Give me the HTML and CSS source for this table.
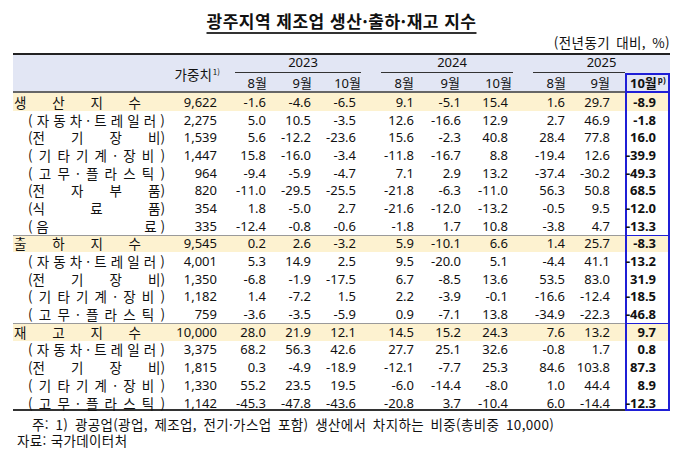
FILE: index.html
```html
<!DOCTYPE html>
<html lang="ko">
<head>
<meta charset="utf-8">
<title>광주지역 제조업 생산·출하·재고 지수</title>
<link rel="stylesheet" href="styles.css">
</head>
<body>
<div class="page">
  <h1 class="title"><span>광주지역 제조업 생산·출하·재고 지수</span></h1>
  <div class="unit">(전년동기 대비, %)</div>
  <table class="tbl">
    <colgroup>
      <col class="c-label"><col class="c-w"><col class="c-47"><col class="c-45"><col class="c-45">
      <col class="c-58"><col class="c-47"><col class="c-47"><col class="c-57"><col class="c-55"><col class="c-45">
    </colgroup>
    <thead>
      <tr class="r-year">
        <th rowspan="2" class="h-span"></th>
        <th rowspan="2" class="h-span h-w">가중치<sup>1)</sup></th>
        <th colspan="3"><div class="yr yr-23">2023</div></th>
        <th colspan="3"><div class="yr yr-24">2024</div></th>
        <th colspan="3"><div class="yr yr-25">2025</div></th>
      </tr>
      <tr class="r-mon">
        <th class="m1">8월</th><th class="m2">9월</th><th class="m3">10월</th>
        <th class="m4">8월</th><th class="m5">9월</th><th class="m6">10월</th>
        <th class="m7">8월</th><th class="m8">9월</th><th class="hl m9">10월<sup>p)</sup></th>
      </tr>
    </thead>
    <tbody>
      <tr class="sec">
        <td><div class="lm"><span>생</span><span>산</span><span>지</span><span>수</span></div></td>
        <td>9,622</td><td>-1.6</td><td>-4.6</td><td>-6.5</td><td>9.1</td><td>-5.1</td><td>15.4</td><td>1.6</td><td>29.7</td><td class="hl">-8.9</td>
      </tr>
      <tr>
        <td><div class="ls"><span>(</span><span>자</span><span>동</span><span>차</span><span>·</span><span>트</span><span>레</span><span>일</span><span>러</span><span>)</span></div></td>
        <td>2,275</td><td>5.0</td><td>10.5</td><td>-3.5</td><td>12.6</td><td>-16.6</td><td>12.9</td><td>2.7</td><td>46.9</td><td class="hl">-1.8</td>
      </tr>
      <tr>
        <td><div class="ls"><span>(전</span><span>기</span><span>장</span><span>비)</span></div></td>
        <td>1,539</td><td>5.6</td><td>-12.2</td><td>-23.6</td><td>15.6</td><td>-2.3</td><td>40.8</td><td>28.4</td><td>77.8</td><td class="hl">16.0</td>
      </tr>
      <tr>
        <td><div class="ls"><span>(</span><span>기</span><span>타</span><span>기</span><span>계</span><span>·</span><span>장</span><span>비</span><span>)</span></div></td>
        <td>1,447</td><td>15.8</td><td>-16.0</td><td>-3.4</td><td>-11.8</td><td>-16.7</td><td>8.8</td><td>-19.4</td><td>12.6</td><td class="hl">-39.9</td>
      </tr>
      <tr>
        <td><div class="ls"><span>(</span><span>고</span><span>무</span><span>·</span><span>플</span><span>라</span><span>스</span><span>틱</span><span>)</span></div></td>
        <td>964</td><td>-9.4</td><td>-5.9</td><td>-4.7</td><td>7.1</td><td>2.9</td><td>13.2</td><td>-37.4</td><td>-30.2</td><td class="hl">-49.3</td>
      </tr>
      <tr>
        <td><div class="ls"><span>(전</span><span>자</span><span>부</span><span>품)</span></div></td>
        <td>820</td><td>-11.0</td><td>-29.5</td><td>-25.5</td><td>-21.8</td><td>-6.3</td><td>-11.0</td><td>56.3</td><td>50.8</td><td class="hl">68.5</td>
      </tr>
      <tr>
        <td><div class="ls"><span>(식</span><span>료</span><span>품)</span></div></td>
        <td>354</td><td>1.8</td><td>-5.0</td><td>2.7</td><td>-21.6</td><td>-12.0</td><td>-13.2</td><td>-0.5</td><td>9.5</td><td class="hl">-12.0</td>
      </tr>
      <tr>
        <td><div class="ls"><span>(&nbsp;음</span><span>료&nbsp;)</span></div></td>
        <td>335</td><td>-12.4</td><td>-0.8</td><td>-0.6</td><td>-1.8</td><td>1.7</td><td>10.8</td><td>-3.8</td><td>4.7</td><td class="hl">-13.3</td>
      </tr>
      <tr class="sec sep">
        <td><div class="lm"><span>출</span><span>하</span><span>지</span><span>수</span></div></td>
        <td>9,545</td><td>0.2</td><td>2.6</td><td>-3.2</td><td>5.9</td><td>-10.1</td><td>6.6</td><td>1.4</td><td>25.7</td><td class="hl">-8.3</td>
      </tr>
      <tr>
        <td><div class="ls"><span>(</span><span>자</span><span>동</span><span>차</span><span>·</span><span>트</span><span>레</span><span>일</span><span>러</span><span>)</span></div></td>
        <td>4,001</td><td>5.3</td><td>14.9</td><td>2.5</td><td>9.5</td><td>-20.0</td><td>5.1</td><td>-4.4</td><td>41.1</td><td class="hl">-13.2</td>
      </tr>
      <tr>
        <td><div class="ls"><span>(전</span><span>기</span><span>장</span><span>비)</span></div></td>
        <td>1,350</td><td>-6.8</td><td>-1.9</td><td>-17.5</td><td>6.7</td><td>-8.5</td><td>13.6</td><td>53.5</td><td>83.0</td><td class="hl">31.9</td>
      </tr>
      <tr>
        <td><div class="ls"><span>(</span><span>기</span><span>타</span><span>기</span><span>계</span><span>·</span><span>장</span><span>비</span><span>)</span></div></td>
        <td>1,182</td><td>1.4</td><td>-7.2</td><td>1.5</td><td>2.2</td><td>-3.9</td><td>-0.1</td><td>-16.6</td><td>-12.4</td><td class="hl">-18.5</td>
      </tr>
      <tr>
        <td><div class="ls"><span>(</span><span>고</span><span>무</span><span>·</span><span>플</span><span>라</span><span>스</span><span>틱</span><span>)</span></div></td>
        <td>759</td><td>-3.6</td><td>-3.5</td><td>-5.9</td><td>0.9</td><td>-7.1</td><td>13.8</td><td>-34.9</td><td>-22.3</td><td class="hl">-46.8</td>
      </tr>
      <tr class="sec sep">
        <td><div class="lm"><span>재</span><span>고</span><span>지</span><span>수</span></div></td>
        <td>10,000</td><td>28.0</td><td>21.9</td><td>12.1</td><td>14.5</td><td>15.2</td><td>24.3</td><td>7.6</td><td>13.2</td><td class="hl">9.7</td>
      </tr>
      <tr>
        <td><div class="ls"><span>(</span><span>자</span><span>동</span><span>차</span><span>·</span><span>트</span><span>레</span><span>일</span><span>러</span><span>)</span></div></td>
        <td>3,375</td><td>68.2</td><td>56.3</td><td>42.6</td><td>27.7</td><td>25.1</td><td>32.6</td><td>-0.8</td><td>1.7</td><td class="hl">0.8</td>
      </tr>
      <tr>
        <td><div class="ls"><span>(전</span><span>기</span><span>장</span><span>비)</span></div></td>
        <td>1,815</td><td>0.3</td><td>-4.9</td><td>-18.9</td><td>-12.1</td><td>-7.7</td><td>25.3</td><td>84.6</td><td>103.8</td><td class="hl">87.3</td>
      </tr>
      <tr>
        <td><div class="ls"><span>(</span><span>기</span><span>타</span><span>기</span><span>계</span><span>·</span><span>장</span><span>비</span><span>)</span></div></td>
        <td>1,330</td><td>55.2</td><td>23.5</td><td>19.5</td><td>-6.0</td><td>-14.4</td><td>-8.0</td><td>1.0</td><td>44.4</td><td class="hl">8.9</td>
      </tr>
      <tr class="last">
        <td><div class="ls"><span>(</span><span>고</span><span>무</span><span>·</span><span>플</span><span>라</span><span>스</span><span>틱</span><span>)</span></div></td>
        <td>1,142</td><td>-45.3</td><td>-47.8</td><td>-43.6</td><td>-20.8</td><td>3.7</td><td>-10.4</td><td>6.0</td><td>-14.4</td><td class="hl">-12.3</td>
      </tr>
    </tbody>
  </table>
  <div class="notes">
    <p class="n1">주: 1) 광공업(광업, 제조업, 전기·가스업 포함) 생산에서 차지하는 비중(총비중 10,000)</p>
    <p class="n2">자료: 국가데이터처</p>
  </div>
</div>
</body>
</html>
```

FILE: styles.css
```css
body {
  margin: 0;
  background: #ffffff;
  color: #111111;
  font-family: "Noto Sans", "Noto Sans CJK KR", sans-serif;
  font-size: 13px;
}

.page {
  width: 657px;
  margin-left: 13px;
}

.title {
  margin: 10px 0 0;
  height: 22px;
  font-family: "Noto Sans CJK KR", sans-serif;
  font-size: 17px;
  font-weight: 700;
  line-height: 22px;
  letter-spacing: 0.5px;
  text-align: center;
  color: #111;
}

.title span {
  text-decoration: underline;
  text-decoration-thickness: 1.5px;
  text-underline-offset: 4px;
  text-decoration-color: #333;
}

.unit {
  margin-top: 2px;
  height: 16px;
  font-family: "Noto Sans CJK KR", sans-serif;
  font-size: 13.5px;
  line-height: 16px;
  letter-spacing: 0.4px;
  word-spacing: 2px;
  text-align: right;
}

.tbl {
  margin-top: 3px;
  width: 657px;
  table-layout: fixed;
  border-collapse: separate;
  border-spacing: 0;
}

.c-label { width: 155px; }
.c-w { width: 56px; }
.c-47 { width: 47px; }
.c-45 { width: 45px; }
.c-58 { width: 58px; }
.c-57 { width: 57px; }
.c-55 { width: 55px; }

thead th {
  background: #e2e6f4;
  font-weight: 400;
  padding: 0;
  line-height: 16px;
  white-space: nowrap;
}

.r-year th {
  height: 20px;
  vertical-align: bottom;
  box-shadow: inset 0 2px 0 #222;
}

.r-year th.h-span {
  vertical-align: middle;
  box-shadow: inset 0 2px 0 #222, inset 0 -2px 0 #666;
}

.h-w {
  text-align: right;
  padding-right: 4px;
  padding-top: 2px;
  font-family: "Noto Sans CJK KR", sans-serif;
  font-size: 13.5px;
}

.yr {
  height: 18px;
  line-height: 17px;
  text-align: center;
}

.yr-23 {
  margin: 0 -10px 0 11px;
  border-bottom: 1px solid #333;
}

.yr-24 {
  margin: 0 -10px 0 20px;
  border-bottom: 1px solid #333;
}

.yr-25 {
  margin: 0 0 0 20px;
  height: 19px;
  background: linear-gradient(#333, #333) no-repeat left bottom / calc(100% - 45px) 1px;
}

.r-mon th {
  height: 20px;
  text-align: right;
  font-family: "Noto Sans", "Noto Sans CJK KR", sans-serif;
  font-size: 13px;
  box-shadow: inset 0 -2px 0 #666;
}

.r-mon .m1 { padding-right: 4px; }
.r-mon .m2 { padding-right: 4px; }
.r-mon .m3 { padding-right: 0; }
.r-mon .m4 { padding-right: 5px; }
.r-mon .m5 { padding-right: 6px; }
.r-mon .m6 { padding-right: 1px; }
.r-mon .m7 { padding-right: 4px; }
.r-mon .m8 { padding-right: 15px; }

.r-mon th.m9 {
  text-align: left;
  padding-left: 5px;
  font-weight: 700;
  box-shadow: inset 2px 0 0 #1f1fd6, inset -2px 0 0 #1f1fd6, inset 0 2px 0 #1f1fd6, inset 0 -2px 0 #1f1fd6;
}

sup {
  font-size: 8px;
  line-height: 0;
  vertical-align: 5px;
  margin-left: 1px;
}

tbody tr {
  height: 17.7px;
}

td {
  padding: 0 5px 0 0;
  text-align: right;
  line-height: 16px;
  white-space: nowrap;
}

td:nth-child(1) {
  padding: 0;
  text-align: left;
  font-family: "Noto Sans CJK KR", sans-serif;
  font-size: 13.5px;
}

td:nth-child(2) { padding-right: 7px; }
td:nth-child(10) { padding-right: 15px; }
td:nth-child(11) { padding-right: 14px; }

td.hl {
  font-weight: 700;
  box-shadow: inset 2px 0 0 #1f1fd6, inset -2px 0 0 #1f1fd6;
}

.sec td {
  background: #fdf2d0;
}

.sep td {
  box-shadow: inset 0 1px 0 #9a9a9a;
}

.sep td.hl {
  box-shadow: inset 2px 0 0 #1f1fd6, inset -2px 0 0 #1f1fd6, inset 0 1px 0 #1f1fd6;
}

.last td {
  box-shadow: inset 0 -2px 0 #333;
}

.last td.hl {
  box-shadow: inset 2px 0 0 #1f1fd6, inset -2px 0 0 #1f1fd6, inset 0 -2px 0 #1f1fd6;
}

.lm {
  display: flex;
  justify-content: space-between;
  width: 127px;
  margin-left: 1px;
}

.ls {
  display: flex;
  justify-content: space-between;
  width: 137px;
  margin-left: 15px;
}

.notes {
  margin-top: 5px;
  font-family: "Noto Sans CJK KR", sans-serif;
  font-size: 13.5px;
  line-height: 16px;
}

.notes p {
  margin: 0;
  white-space: nowrap;
}

.n1 {
  padding-left: 19px;
  letter-spacing: 0.35px;
  word-spacing: 2.5px;
}

.n2 {
  padding-left: 4px;
  letter-spacing: 0.35px;
}
```
